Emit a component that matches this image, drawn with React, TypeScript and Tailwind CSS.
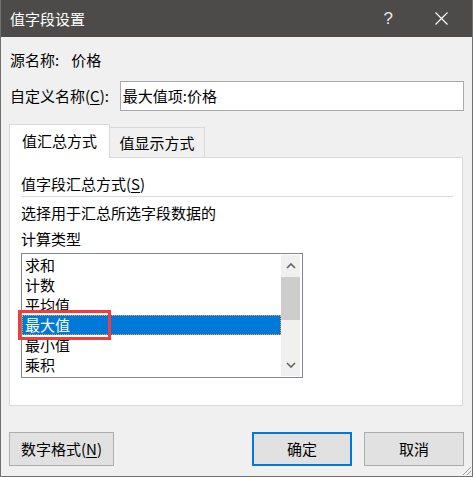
export default function App() {
  const items = ["求和", "计数", "平均值", "最大值", "最小值", "乘积"];
  const selected = 3;

  return (
    <div
      className="relative flex h-[477px] w-[473px] flex-col border-x border-b border-[#707070] bg-[#f0f0f0] text-[15px] text-black"
      style={{ fontFamily: '"Noto Sans CJK SC", "Noto Sans", sans-serif' }}
    >
      {/* Title bar */}
      <div className="flex h-[37px] shrink-0 items-center bg-[#4d4b49] pl-[9px] text-white">
        <span className="leading-[20px]">值字段设置</span>
        <span
          className="ml-auto mr-[42px] text-[17px] leading-[20px] text-[#e8e8e8]"
          style={{ fontFamily: '"Liberation Sans", sans-serif' }}
        >
          ?
        </span>
        <svg width="13" height="13" viewBox="0 0 13 13" className="mr-[24px]">
          <path d="M0.5 0.5 L12.5 12.5 M12.5 0.5 L0.5 12.5" stroke="#ffffff" strokeWidth="1.2" />
        </svg>
      </div>

      <div className="flex flex-col px-[8px]">
        {/* Source name */}
        <div className="mt-[13px] flex h-[20px] items-center pl-[1px] leading-[20px]">
          <span>源名称:</span>
          <span className="ml-[12px]">价格</span>
        </div>

        {/* Custom name */}
        <div className="mt-[11px] flex items-center">
          <span className="w-[111px] pl-[1px] leading-[20px]">
            自定义名称(<span className="underline underline-offset-2">C</span>):
          </span>
          <div className="flex h-[30px] w-[345px] items-center border border-[#a9a9a9] bg-white pl-[2px] leading-[20px]">
            最大值项:价格
          </div>
        </div>

        {/* Tabs */}
        <div className="mt-[13px] flex items-end">
          <div className="relative z-10 -mb-px flex h-[34px] w-[101px] items-center justify-center border-x border-t border-[#d9d9d9] bg-white pb-[1px] leading-[20px]">
            值汇总方式
          </div>
          <div className="flex h-[30px] w-[95px] items-center justify-center border-r border-t border-[#d9d9d9] bg-[#f0f0f0] leading-[20px]">
            值显示方式
          </div>
        </div>

        {/* Panel */}
        <div className="flex h-[249px] w-[454px] flex-col border border-[#d9d9d9] bg-white pl-[11px] pr-[9px]">
          <div className="mt-[16px] leading-[20px]">
            值字段汇总方式(<span className="underline underline-offset-2">S</span>)
          </div>
          <div className="mt-[2px] h-px bg-[#d9d9d9]" />
          <div className="mt-[3px] leading-[26px]">
            选择用于汇总所选字段数据的
            <br />
            计算类型
          </div>

          {/* Listbox */}
          <div className="relative mt-[1px] flex h-[125px] w-[282px] border border-[#828790] bg-white">
            <div className="flex flex-1 flex-col pt-[1px]">
              {items.map((item, i) =>
                i === selected ? (
                  <div
                    key={item}
                    className="flex h-[20px] items-center border border-dotted border-[#f5a623] bg-[#0078d7] pl-[2px] leading-[20px] text-white"
                  >
                    {item}
                  </div>
                ) : (
                  <div key={item} className="flex h-[20px] items-center pl-[3px] leading-[20px]">
                    {item}
                  </div>
                )
              )}
            </div>
            {/* Scrollbar */}
            <div className="my-px mr-[2px] flex w-[19px] flex-col bg-[#f0f0f0]">
              <div className="flex h-[22px] items-center justify-center">
                <svg width="10" height="6" viewBox="0 0 10 6">
                  <path d="M1 5 L5 1 L9 5" fill="none" stroke="#606060" strokeWidth="1.6" />
                </svg>
              </div>
              <div className="h-[43px] bg-[#cdcdcd]" />
              <div className="flex-1" />
              <div className="flex h-[22px] items-center justify-center">
                <svg width="10" height="6" viewBox="0 0 10 6">
                  <path d="M1 1 L5 5 L9 1" fill="none" stroke="#606060" strokeWidth="1.6" />
                </svg>
              </div>
            </div>
            {/* Highlight box */}
            <div className="pointer-events-none absolute left-[-4px] top-[56px] h-[30px] w-[93px] border-[3px] border-[#f03c3c]" />
          </div>
        </div>

        {/* Buttons */}
        <div className="mt-[26px] flex items-center">
          <button className="h-[34px] w-[105px] border border-[#adadad] bg-[#e1e1e1] leading-[20px]">
            数字格式(<span className="underline underline-offset-2">N</span>)
          </button>
          <button className="ml-[138px] h-[34px] w-[100px] border-2 border-[#0078d7] bg-[#e1e1e1] leading-[20px]">
            确定
          </button>
          <button className="ml-[12px] h-[34px] w-[100px] border border-[#adadad] bg-[#e1e1e1] leading-[20px]">
            取消
          </button>
        </div>
      </div>

      {/* Resize grip */}
      <svg width="12" height="12" viewBox="0 0 12 12" className="absolute bottom-0 right-0">
        <path d="M11 3 L3 11 M11 7 L7 11" stroke="#a0a0a0" strokeWidth="1" />
      </svg>
    </div>
  );
}
